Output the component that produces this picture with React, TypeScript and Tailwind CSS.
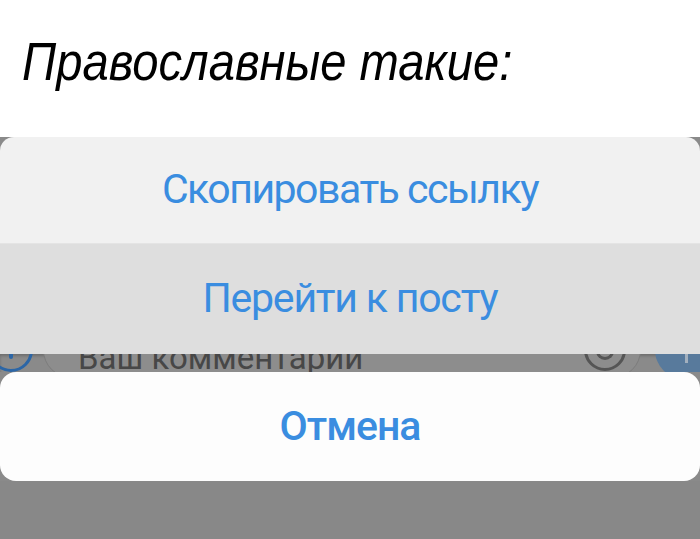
export default function App() {
    return (
        <div className="w-[700px] h-[539px] overflow-hidden bg-[#8a8a8a] flex flex-col">
            <div className="h-[137px] shrink-0 bg-white pl-[22px] pt-[35px]">
                <h1
                    className="text-[53px] leading-none italic text-black origin-left scale-x-[0.89] whitespace-nowrap"
                    style={{ fontFamily: '"Liberation Sans", Arial, sans-serif' }}
                >
                    Православные такие:
                </h1>
            </div>

            <div className="rounded-t-[14px] overflow-hidden shrink-0" style={{ fontFamily: 'Roboto, "Noto Sans", sans-serif' }}>
                <button className="w-full h-[107px] bg-[#f1f1f1] text-[#3a8de0] text-[41px] tracking-[-1.5px] border-b border-[#e4e4e4]">
                    Скопировать ссылку
                </button>
                <button className="w-full h-[110px] bg-[#dedede] text-[#3a8de0] text-[41px] tracking-[-1.2px]">
                    Перейти к посту
                </button>
            </div>

            <div className="h-[18px] shrink-0 overflow-hidden bg-[#8a8a8a] shadow-[inset_0_2px_3px_rgba(0,0,0,0.2)]">
                <div className="flex items-center h-[60px] -mt-[34px]">
                    <div className="w-[44px] h-[44px] -ml-[11px] rounded-full border-[3px] border-[#2c66a6] shrink-0 flex justify-center pt-[14px]">
                        <div className="w-[4px] h-[14px] bg-[#2c66a6] rounded-full" />
                    </div>
                    <div className="flex-1 ml-[10px] h-[56px] rounded-full border border-[#7c7c7c] bg-[#8d8d8d] flex items-center pl-[34px] pr-[14px]">
                        <span className="flex-1 text-[33px] leading-none pt-[14px] text-[#474747] whitespace-nowrap" style={{ fontFamily: 'Roboto, sans-serif' }}>
                            Ваш комментарий
                        </span>
                        <div className="w-[42px] h-[42px] rounded-full border-[3px] border-[#555555] flex items-end justify-center pb-[8px]">
                            <div className="w-[18px] h-[9px] border-b-[3px] border-x-[3px] border-t-0 border-[#555555] rounded-b-full" />
                        </div>
                    </div>
                    <div className="w-[58px] h-[58px] ml-[14px] -mr-[13px] rounded-full bg-[#587a9c] shrink-0 flex pl-[30px] pt-[8px]">
                        <div className="w-[3px] h-[34px] bg-[#a3b0be]" />
                    </div>
                </div>
            </div>

            <button
                className="w-full h-[109px] shrink-0 bg-[#fdfdfd] rounded-[16px] text-[#3a8de0] text-[41px] font-medium tracking-[-1px]"
                style={{ fontFamily: 'Roboto, "Noto Sans", sans-serif' }}
            >
                Отмена
            </button>

            <div className="flex-1 bg-[#888888]" />
        </div>
    )
}
